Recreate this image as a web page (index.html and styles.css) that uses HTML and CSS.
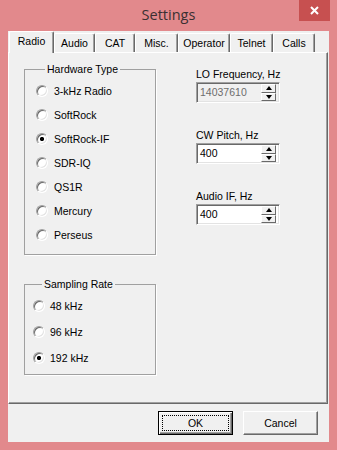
FILE: index.html
```html
<!DOCTYPE html>
<html lang="en">
<head>
    <meta charset="UTF-8">
    <meta name="viewport" content="width=device-width, initial-scale=1.0">
    <title>Settings</title>
    <link rel="stylesheet" href="styles.css">
</head>
<body>
    <div class="window">
        <div class="titlebar">
            <span></span>
            <h1 class="title">Settings</h1>
            <button class="close" aria-label="Close">
                <svg width="9" height="9" viewBox="0 0 9 9">
                    <path d="M1 1 L8 8 M8 1 L1 8" stroke="#fff" stroke-width="2" fill="none"/>
                </svg>
            </button>
        </div>

        <div class="client">
            <div class="tab-row">
                <div class="tab tab-radio active">Radio</div>
                <div class="tab tab-audio">Audio</div>
                <div class="tab tab-cat">CAT</div>
                <div class="tab tab-misc">Misc.</div>
                <div class="tab tab-operator">Operator</div>
                <div class="tab tab-telnet">Telnet</div>
                <div class="tab tab-calls">Calls</div>
            </div>

            <div class="tab-panel">
                <div class="left-col">
                    <fieldset class="group hardware">
                        <legend>Hardware Type</legend>
                        <div class="radio"><span class="mark"></span>3-kHz Radio</div>
                        <div class="radio"><span class="mark"></span>SoftRock</div>
                        <div class="radio"><span class="mark checked"></span>SoftRock-IF</div>
                        <div class="radio"><span class="mark"></span>SDR-IQ</div>
                        <div class="radio"><span class="mark"></span>QS1R</div>
                        <div class="radio"><span class="mark"></span>Mercury</div>
                        <div class="radio"><span class="mark"></span>Perseus</div>
                    </fieldset>

                    <fieldset class="group sampling">
                        <legend>Sampling Rate</legend>
                        <div class="radio"><span class="mark"></span>48 kHz</div>
                        <div class="radio"><span class="mark"></span>96 kHz</div>
                        <div class="radio"><span class="mark checked"></span>192 kHz</div>
                    </fieldset>
                </div>

                <div class="right-col">
                    <div class="field">
                        <div class="field-label">LO Frequency, Hz</div>
                        <div class="spinbox disabled">
                            <span class="value">14037610</span>
                            <span class="spin"><span class="spin-btn up"></span><span class="spin-btn down"></span></span>
                        </div>
                    </div>
                    <div class="field">
                        <div class="field-label">CW Pitch, Hz</div>
                        <div class="spinbox">
                            <span class="value">400</span>
                            <span class="spin"><span class="spin-btn up"></span><span class="spin-btn down"></span></span>
                        </div>
                    </div>
                    <div class="field">
                        <div class="field-label">Audio IF, Hz</div>
                        <div class="spinbox">
                            <span class="value">400</span>
                            <span class="spin"><span class="spin-btn up"></span><span class="spin-btn down"></span></span>
                        </div>
                    </div>
                </div>
            </div>

            <div class="footer">
                <button class="btn default"><span class="focus">OK</span></button>
                <button class="btn">Cancel</button>
            </div>
        </div>
    </div>
</body>
</html>
```

FILE: styles.css
```css
body {
    margin: 0;
    padding: 0;
    background-color: #e2898c;
    font-family: "Liberation Sans", Arial, sans-serif;
    font-size: 10.5px;
    color: #000;
}

.window {
    width: 337px;
    height: 450px;
    overflow: hidden;
}

.titlebar {
    height: 31px;
    display: grid;
    grid-template-columns: 1fr auto 1fr;
}

.title {
    margin: 0;
    padding-top: 5px;
    font-family: "Open Sans", sans-serif;
    font-size: 14.5px;
    font-weight: normal;
    line-height: 20px;
    color: #3a3032;
}

.close {
    justify-self: end;
    width: 31px;
    height: 21px;
    margin-right: 7px;
    padding: 0;
    border: none;
    background-color: #c75050;
    display: flex;
    align-items: center;
    justify-content: center;
}

.client {
    height: 411px;
    margin: 0 8px;
    background-color: #f0f0f0;
    display: flex;
    flex-direction: column;
}

/* tabs */

.tab-row {
    display: flex;
    align-items: flex-end;
    height: 21px;
    padding-left: 1px;
}

.tab {
    box-sizing: border-box;
    height: 19px;
    padding-top: 3px;
    line-height: 12px;
    font-size: 10.5px;
    text-align: center;
    border-top: 1px solid #fff;
    border-left: 1px solid #fff;
    border-right: 1px solid #696969;
    border-radius: 2px 2px 0 0;
    box-shadow: inset -1px 0 #a0a0a0;
    background-color: #f0f0f0;
}

.tab.active {
    height: 22px;
    margin-bottom: -1px;
    position: relative;
    z-index: 1;
}

.tab-radio { width: 45px; }
.tab-audio { width: 41px; }
.tab-cat { width: 40px; }
.tab-misc { width: 43px; }
.tab-operator { width: 52px; }
.tab-telnet { width: 43px; }
.tab-calls { width: 42px; }

.tab-panel {
    box-sizing: border-box;
    width: 320px;
    height: 352px;
    padding: 10px 0 0 15px;
    border: 1px solid;
    border-color: #fff #696969 #696969 #fff;
    box-shadow: inset -1px -1px #a0a0a0;
    display: grid;
    grid-template-columns: 132px 110px;
    column-gap: 40px;
    align-items: start;
}

/* group boxes */

.group {
    box-sizing: border-box;
    width: 132px;
    margin: 0;
    padding: 0;
    border: 1px solid #a0a0a0;
    box-shadow: 1px 1px 0 #fff;
}

.group legend {
    margin-left: 9px;
    padding: 0 2px;
    line-height: 13px;
}

.hardware {
    padding: 3px 0 7px 11px;
}

.hardware .radio {
    height: 24px;
    gap: 6px;
}

.sampling {
    margin-top: 23px;
    padding: 2px 0 3px 8px;
}

.sampling .radio {
    height: 26px;
    gap: 5px;
}

.radio {
    display: flex;
    align-items: center;
}

.mark {
    box-sizing: border-box;
    width: 12px;
    height: 12px;
    border-radius: 50%;
    border: 1px solid;
    border-color: #a0a0a0 #fff #fff #a0a0a0;
    background: #fff;
    box-shadow: inset 1px 1px #696969, inset -1px -1px #e3e3e3;
}

.mark.checked {
    background: radial-gradient(circle, #000 1.8px, #fff 2.4px);
}

/* spin fields */

.right-col {
    padding-top: 4px;
}

.field + .field {
    margin-top: 25px;
}

.field-label {
    line-height: 14px;
    margin-bottom: 1px;
    white-space: nowrap;
}

.spinbox {
    box-sizing: border-box;
    width: 84px;
    height: 21px;
    padding: 1px 2px 1px 1px;
    border: 1px solid;
    border-color: #a0a0a0 #fff #fff #a0a0a0;
    box-shadow: inset 1px 1px #696969, inset -1px -1px #e3e3e3;
    background-color: #fff;
    display: flex;
}

.spinbox.disabled {
    background-color: #f0f0f0;
    color: #6d6d6d;
}

.value {
    flex: 1;
    padding-left: 2px;
    line-height: 17px;
}

.spin {
    width: 15px;
    margin-right: 1px;
    display: flex;
    flex-direction: column;
}

.spin-btn {
    flex: 1;
    border: 1px solid;
    border-color: #fff #696969 #696969 #fff;
    background-color: #f0f0f0;
    display: flex;
    align-items: center;
    justify-content: center;
}

.spin-btn::before {
    content: "";
    border-left: 3.5px solid transparent;
    border-right: 3.5px solid transparent;
}

.spin-btn.up::before {
    border-bottom: 4px solid #000;
}

.spin-btn.down::before {
    border-top: 4px solid #000;
}

/* buttons */

.footer {
    flex: 1;
    display: flex;
    justify-content: flex-end;
    align-items: flex-start;
    gap: 10px;
    padding: 7px 11px 0 0;
}

.btn {
    box-sizing: border-box;
    width: 75px;
    height: 24px;
    padding: 0;
    font-family: "Liberation Sans", Arial, sans-serif;
    font-size: 10.5px;
    color: #000;
    background-color: #f0f0f0;
    border: 1px solid;
    border-color: #fff #696969 #696969 #fff;
    box-shadow: inset -1px -1px #a0a0a0;
}

.btn.default {
    display: flex;
    padding: 3px;
    border-color: #000;
    box-shadow: inset 1px 1px #fff, inset -1px -1px #696969, inset -2px -2px #a0a0a0;
}

.focus {
    flex: 1;
    border: 1px dotted #000;
    display: flex;
    align-items: center;
    justify-content: center;
}
```
